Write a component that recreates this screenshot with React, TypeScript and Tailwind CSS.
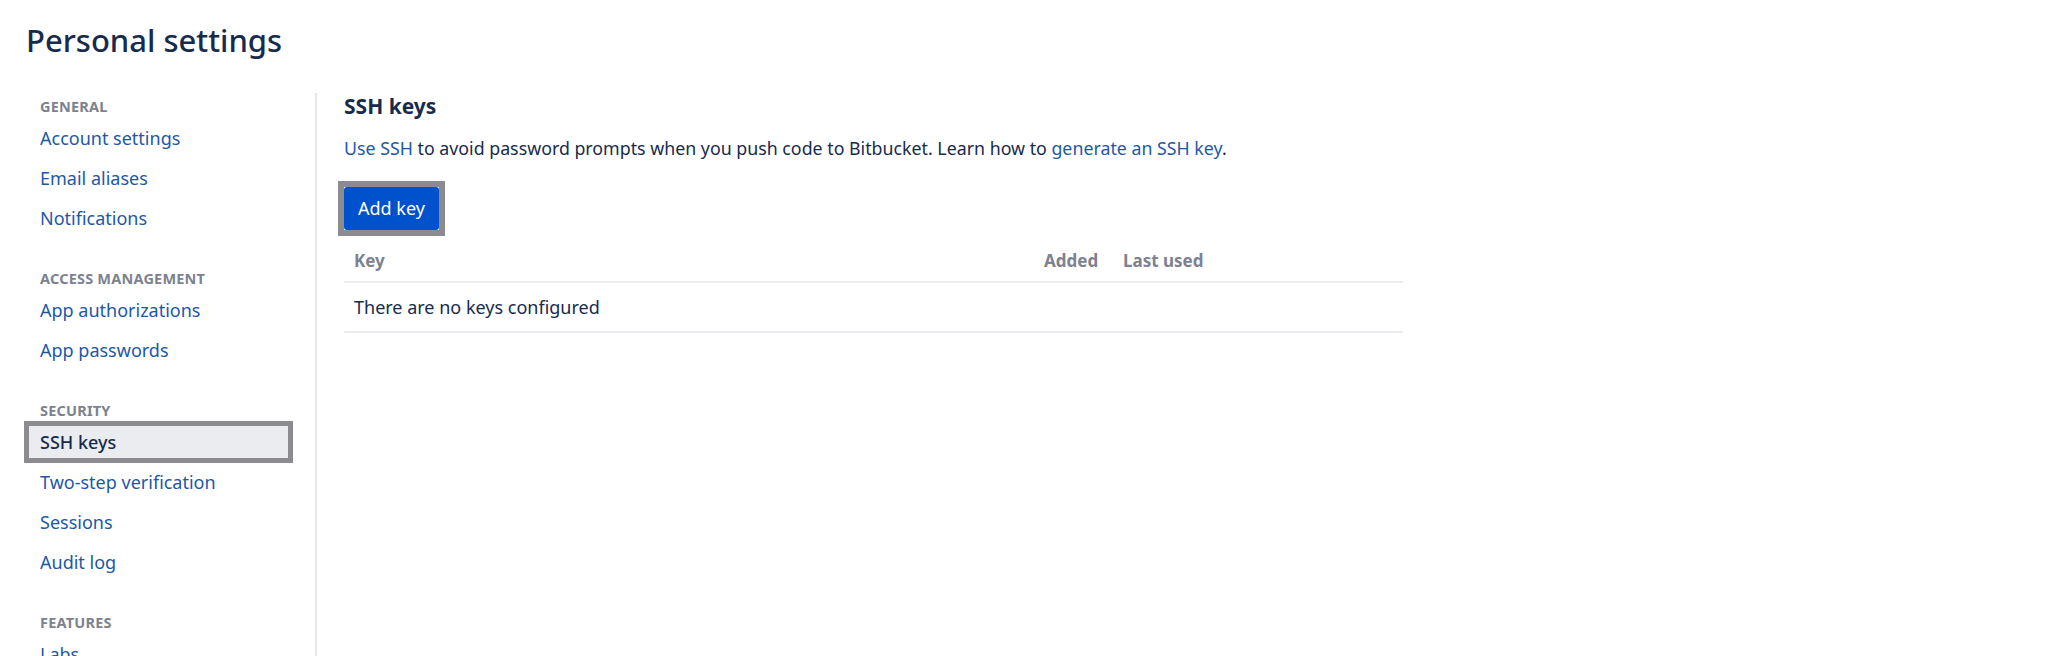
import React from 'react';

type NavGroup = {
  title: string;
  items: string[];
};

const NAV: NavGroup[] = [
  { title: 'General', items: ['Account settings', 'Email aliases', 'Notifications'] },
  { title: 'Access management', items: ['App authorizations', 'App passwords'] },
  { title: 'Security', items: ['SSH keys', 'Two-step verification', 'Sessions', 'Audit log'] },
  { title: 'Features', items: ['Labs'] },
];

const ACTIVE = 'SSH keys';

function Sidebar() {
  return (
    <nav className="w-[317px] shrink-0 border-r-2 border-[#e4e6ea] pl-6 pr-[22px] pt-[5px]">
      {NAV.map((group) => (
        <div key={group.title} className="mb-[32px]">
          <div className="pl-4 text-[14.5px] font-bold uppercase leading-[16px] tracking-[0.2px] text-[#7c8290] mb-[4px]">
            {group.title}
          </div>
          {group.items.map((item) =>
            item === ACTIVE ? (
              <div
                key={item}
                className="-my-px flex h-[42px] items-center border-[5px] border-[#8b8b90] bg-[#ebecf0] pl-[11px] font-medium text-[#172b4d]"
              >
                {item}
              </div>
            ) : (
              <a key={item} href="#" className="flex h-10 items-center pl-4 text-[#1d58a8]">
                {item}
              </a>
            ),
          )}
        </div>
      ))}
    </nav>
  );
}

function SshKeysPanel() {
  return (
    <main className="flex-1 pl-[27px]">
      <h2 className="text-[21px] font-bold leading-[26px] text-[#172b4d]">SSH keys</h2>
      <p className="mt-[17px] text-[17.8px] leading-6 text-[#172b4d]">
        <a href="#" className="text-[#1d58a8]">Use SSH</a> to avoid password prompts when you push code to Bitbucket.
        Learn how to <a href="#" className="text-[#1d58a8]">generate an SSH key</a>.
      </p>

      {/* focus frame sits outside the button */}
      <div className="-mx-[6px] mt-[21px] -mb-[6px] inline-flex border-[6px] border-[#8c8c90]">
        <button className="h-[43px] rounded-[3px] bg-[#0052cc] px-[14px] text-white">Add key</button>
      </div>

      {/* Key table */}
      <div className="mt-[11px] w-[1059px]">
        <div className="grid h-[42px] grid-cols-[690px_79px_110px_1fr] items-center border-b-2 border-[#ebecf0] text-[17px] font-bold text-[#7c8290]">
          <div className="px-[10px]">Key</div>
          <div className="px-[10px]">Added</div>
          <div className="px-[10px]">Last used</div>
          <div />
        </div>
        <div className="flex h-[50px] items-center border-b-2 border-[#ebecf0] px-[10px] text-[#172b4d]">
          There are no keys configured
        </div>
      </div>
    </main>
  );
}

export default function App() {
  return (
    <div className="h-[656px] overflow-hidden bg-white pt-5 pl-[26px] text-[18px] font-['Noto_Sans',sans-serif]">
      <h1 className="text-[31px] font-medium leading-10 text-[#172b4d]">Personal settings</h1>
      <div className="-ml-[26px] mt-[33px] flex min-h-[600px]">
        <Sidebar />
        <SshKeysPanel />
      </div>
    </div>
  );
}
